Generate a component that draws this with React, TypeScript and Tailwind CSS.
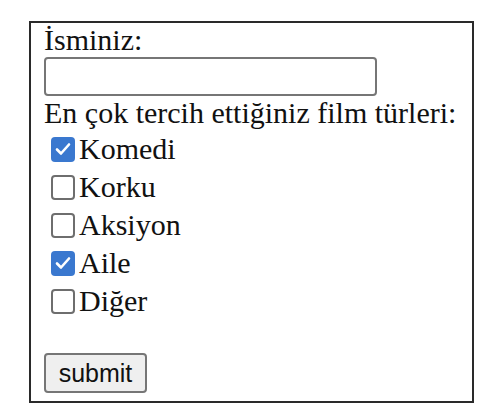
import React, { useState } from 'react';

const genres = [
  { name: 'Komedi', checked: true },
  { name: 'Korku', checked: false },
  { name: 'Aksiyon', checked: false },
  { name: 'Aile', checked: true },
  { name: 'Diğer', checked: false },
];

function Box({ checked, onClick }: { checked: boolean; onClick: () => void }) {
  return (
    <span
      onClick={onClick}
      className={
        checked
          ? 'w-[24px] h-[25px] rounded-[4px] bg-[#3a78cf] flex items-center justify-center shrink-0'
          : 'w-[24px] h-[25px] rounded-[4px] border-2 border-[#6e6e6e] bg-white shrink-0'
      }
    >
      {checked && (
        <svg width="16" height="14" viewBox="0 0 16 14" fill="none">
          <path d="M2 7.5 L6 11.5 L14 2.5" stroke="white" strokeWidth="2.6" strokeLinecap="round" strokeLinejoin="round" />
        </svg>
      )}
    </span>
  );
}

export default function App() {
  const [items, setItems] = useState(genres);

  return (
    <div className="w-[492px] h-[415px] bg-white pt-[21px] pl-[29px] font-['Liberation_Serif',serif] text-[#111]">
      <div className="w-[445px] h-[382px] border-2 border-[#2a2a2a] pl-[13px] flex flex-col">
        {/* isim alanı */}
        <div className="h-[34px] text-[30px] leading-[34px]">İsminiz:</div>
        <input
          type="text"
          className="w-[333px] h-[39px] border-2 border-[#767676] rounded-[4px] bg-white outline-none"
        />
        <div className="h-[34px] text-[30px] leading-[34px]">En çok tercih ettiğiniz film türleri:</div>

        {/* film türleri */}
        <div className="flex flex-col pl-[7px]">
          {items.map((g, i) => (
            <label key={g.name} className="h-[38px] flex items-center gap-[4px] text-[30px] leading-[38px]">
              <Box
                checked={g.checked}
                onClick={() =>
                  setItems(items.map((x, j) => (j === i ? { ...x, checked: !x.checked } : x)))
                }
              />
              <span>{g.name}</span>
            </label>
          ))}
        </div>

        <div className="h-[33px]" />
        <button className="w-[103px] h-[40px] border-2 border-[#767676] rounded-[4px] bg-[#efefef] font-['Liberation_Sans',Arial,sans-serif] text-[25px] leading-none text-[#111]">
          submit
        </button>
      </div>
    </div>
  );
}
